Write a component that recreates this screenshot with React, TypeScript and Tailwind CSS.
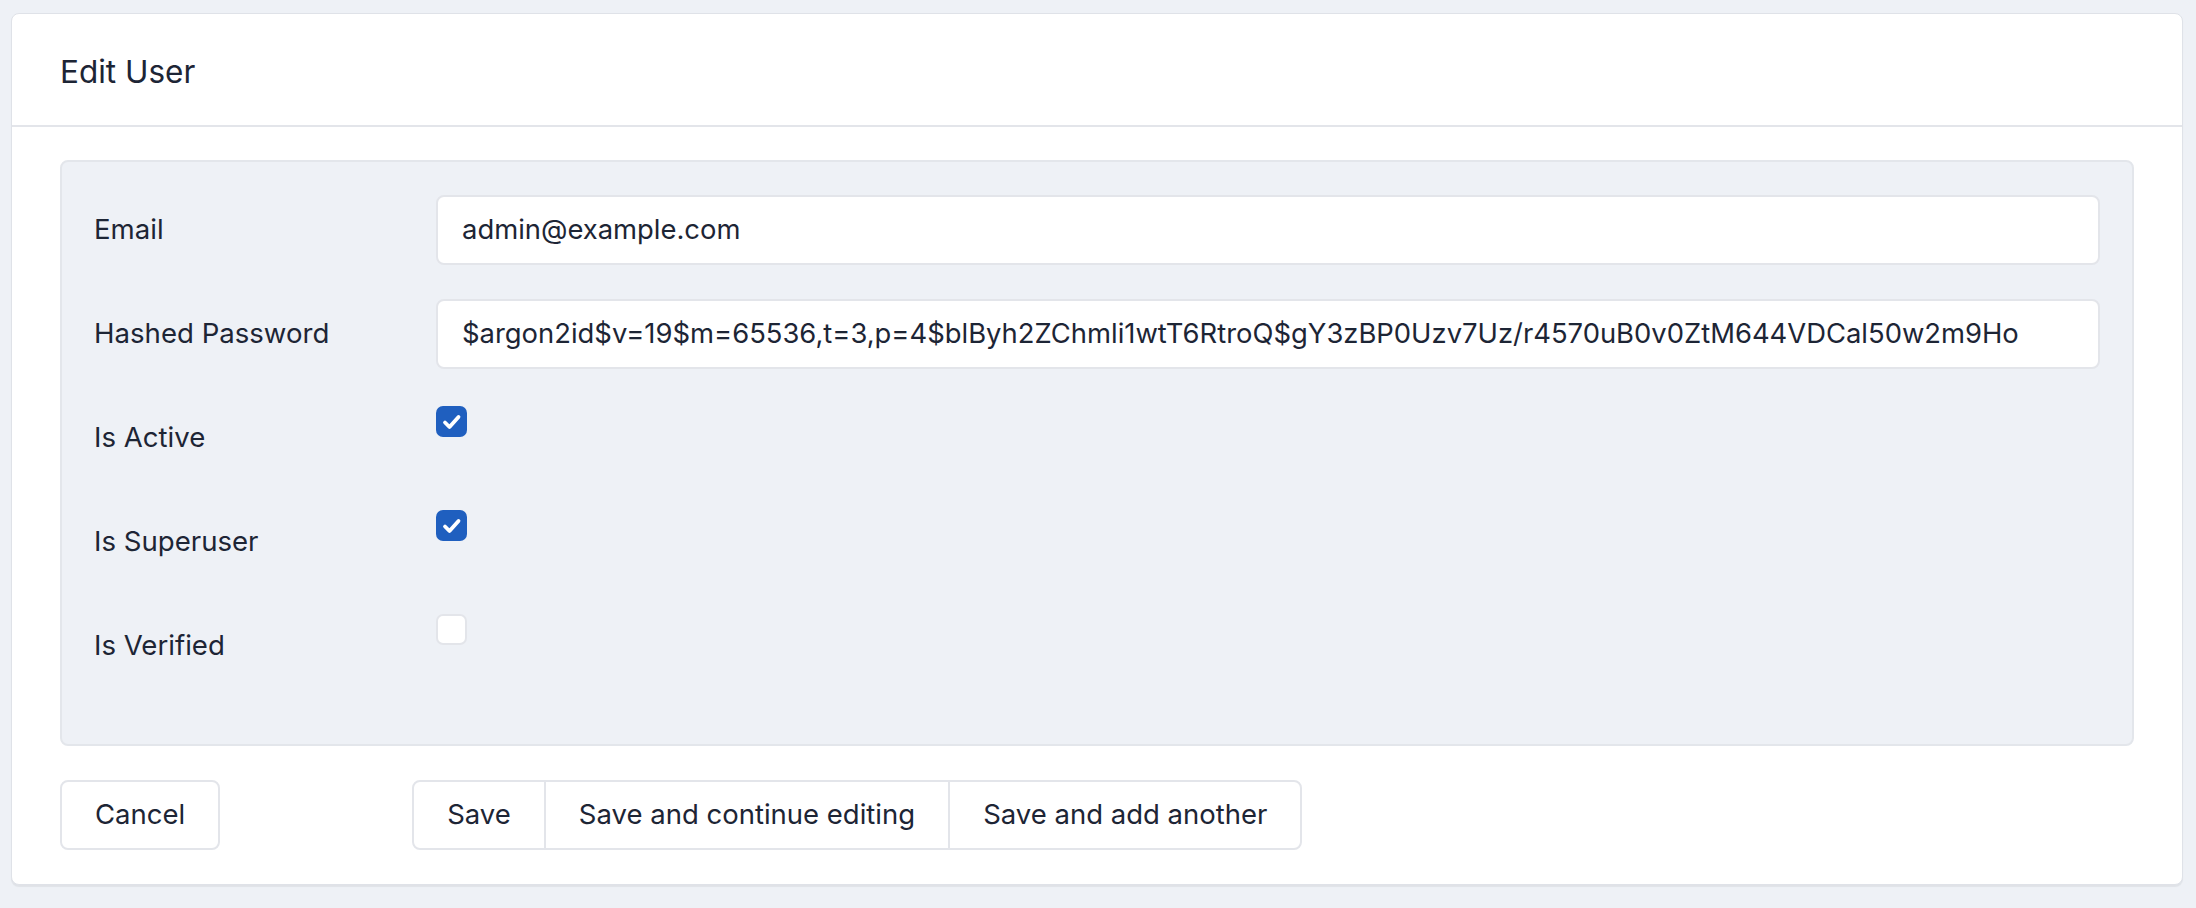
import React from 'react'

const FONT = { fontFamily: 'Inter, "Noto Sans", sans-serif' }

type Field =
  | { kind: 'text'; label: string; value: string }
  | { kind: 'check'; label: string; checked: boolean }

const FIELDS: Field[] = [
  { kind: 'text', label: 'Email', value: 'admin@example.com' },
  {
    kind: 'text',
    label: 'Hashed Password',
    value: '$argon2id$v=19$m=65536,t=3,p=4$blByh2ZChmli1wtT6RtroQ$gY3zBP0Uzv7Uz/r4570uB0v0ZtM644VDCal50w2m9Ho',
  },
  { kind: 'check', label: 'Is Active', checked: true },
  { kind: 'check', label: 'Is Superuser', checked: true },
  { kind: 'check', label: 'Is Verified', checked: false },
]

function Checkbox({ checked }: { checked: boolean }) {
  if (!checked) {
    return <div className="mt-[3px] w-[31px] h-[31px] rounded-[7px] bg-white border-2 border-[#e3e5ea]" />
  }
  return (
    <div className="mt-[3px] w-[31px] h-[31px] rounded-[7px] bg-[#1f5fbf] flex items-center justify-center">
      <svg width="24" height="24" viewBox="0 0 24 24" fill="none">
        <path d="M5 12.5l4.5 4.5 9-10" stroke="white" strokeWidth="3.8" strokeLinecap="round" strokeLinejoin="round" />
      </svg>
    </div>
  )
}

export default function App() {
  return (
    <div className="min-h-screen bg-[#eef1f6] pl-[11px] pr-[13px] pt-[13px] pb-[20px] text-[#1d2535]" style={FONT}>
      <div className="bg-white rounded-[8px] border border-[#dfe2e8] shadow-[0_2px_1px_rgba(0,0,0,0.06)]">
        {/* Header */}
        <div className="h-[113px] px-[48px] pt-[5px] flex items-center border-b-2 border-[#e3e5ea]">
          <h1 className="text-[31.5px] font-normal">Edit User</h1>
        </div>

        <div className="px-[48px] pt-[33px] pb-[34px]">
          {/* Fields */}
          <div className="bg-[#eef1f6] border-2 border-[#e3e6eb] rounded-[8px] px-[32px] pt-[33px] pb-[29px]">
            {FIELDS.map(f => (
              <div key={f.label} className="grid grid-cols-[342px_1fr] mb-[34px]">
                <div className="h-[70px] flex items-center text-[27.6px]">{f.label}</div>
                <div>
                  {f.kind === 'text' ? (
                    <div className="h-[70px] bg-white border-2 border-[#e3e5ea] rounded-[8px] px-[24px] flex items-center text-[27.4px] whitespace-nowrap overflow-hidden">
                      {f.value}
                    </div>
                  ) : (
                    <Checkbox checked={f.checked} />
                  )}
                </div>
              </div>
            ))}
          </div>

          {/* Actions */}
          <div className="flex items-center mt-[34px] text-[27.5px]">
            <button className="h-[70px] px-[33px] bg-white border-2 border-[#e3e5ea] rounded-[8px]">Cancel</button>
            <div className="ml-[192px] flex h-[70px] bg-white border-2 border-[#e3e5ea] rounded-[8px] overflow-hidden">
              <button className="px-[33px]">Save</button>
              <button className="px-[33px] border-l-2 border-[#e3e5ea]">Save and continue editing</button>
              <button className="px-[33px] border-l-2 border-[#e3e5ea]">Save and add another</button>
            </div>
          </div>
        </div>
      </div>
    </div>
  )
}
